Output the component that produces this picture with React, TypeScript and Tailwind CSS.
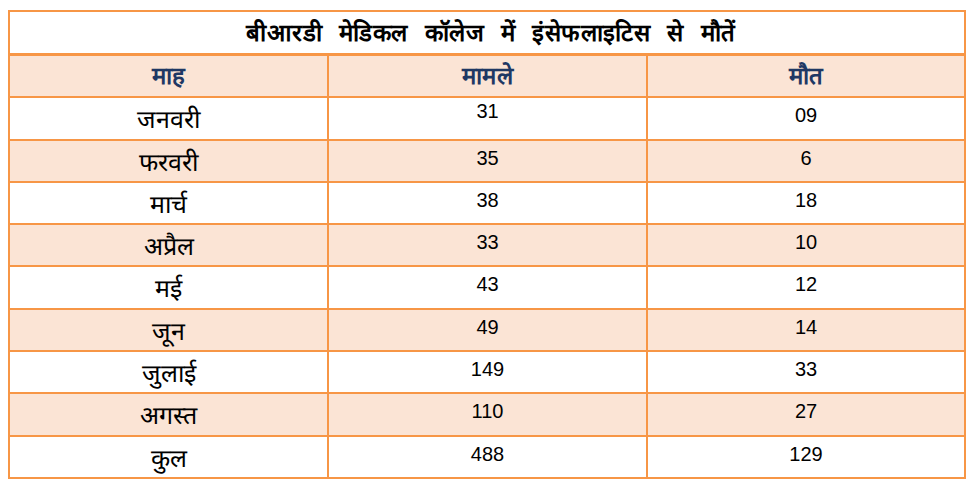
const rows = [
  { month: "जनवरी", cases: "31", deaths: "09" },
  { month: "फरवरी", cases: "35", deaths: "6" },
  { month: "मार्च", cases: "38", deaths: "18" },
  { month: "अप्रैल", cases: "33", deaths: "10" },
  { month: "मई", cases: "43", deaths: "12" },
  { month: "जून", cases: "49", deaths: "14" },
  { month: "जुलाई", cases: "149", deaths: "33" },
  { month: "अगस्त", cases: "110", deaths: "27" },
  { month: "कुल", cases: "488", deaths: "129" },
]

export default function App() {
  return (
    <div className="w-[974px] h-[489px] bg-white pl-[8px] pt-[10px] font-['Liberation_Sans',sans-serif]">
      <div className="w-[958px] border-2 border-[#F79646]">
        {/* Title */}
        <div className="h-[44px] border-b-[3px] border-[#F79646] flex items-center justify-center pl-[8px] text-[24px] font-bold text-black tracking-[0.4px] [word-spacing:10px]">
          बीआरडी मेडिकल कॉलेज में इंसेफलाइटिस से मौतें
        </div>

        {/* Header */}
        <div className="grid grid-cols-[319px_319px_1fr] h-[42.3px] border-b-2 border-[#F79646] bg-[#FBE4D5] text-[#1F3864] font-bold text-[24px] tracking-[0.5px]">
          <div className="border-r-2 border-[#F79646] flex items-center justify-center">माह</div>
          <div className="border-r-2 border-[#F79646] flex items-center justify-center">मामले</div>
          <div className="flex items-center justify-center">मौत</div>
        </div>

        {rows.map((row, i) => (
          <div
            key={row.month}
            className={`grid grid-cols-[319px_319px_1fr] ${i === rows.length - 1 ? "h-[40.3px]" : "h-[42.3px] border-b-2"} border-[#F79646] ${i % 2 === 1 ? "bg-[#FBE4D5]" : "bg-white"} text-black`}
          >
            <div className="border-r-2 border-[#F79646] flex items-center justify-center pt-[3px] text-[25px]">{row.month}</div>
            {/* the first row sits a little higher in the source sheet */}
            <div className={`border-r-2 border-[#F79646] flex justify-center ${i === 0 ? "pt-[1px]" : "pt-[5px]"} text-[20px] leading-[24px]`}>
              {row.cases}
            </div>
            <div className="flex justify-center pt-[5px] text-[20px] leading-[24px]">{row.deaths}</div>
          </div>
        ))}
      </div>
    </div>
  )
}
